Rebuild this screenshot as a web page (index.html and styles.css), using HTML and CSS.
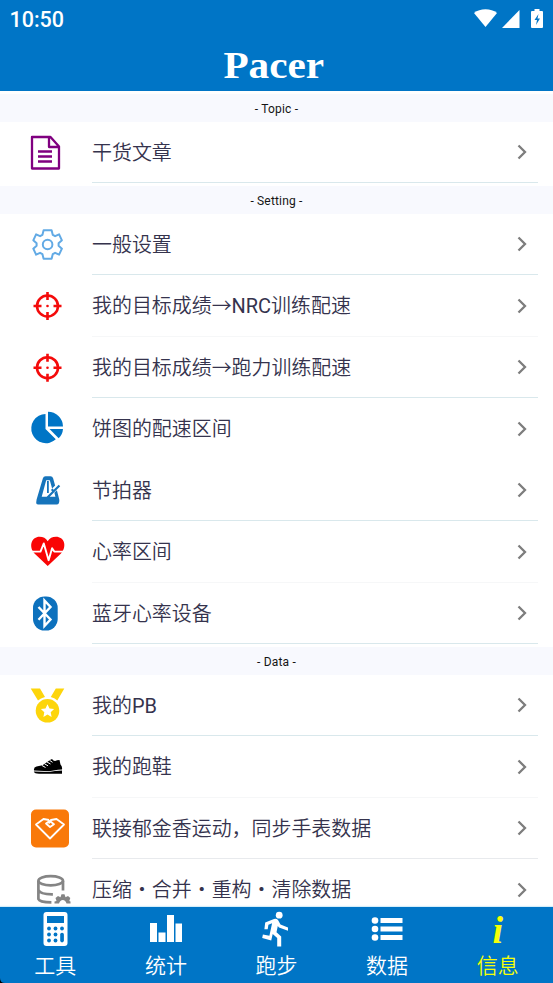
FILE: index.html
```
<!DOCTYPE html>
<html lang="zh-CN">
<head>
<meta charset="utf-8">
<title>Pacer</title>
<link rel="stylesheet" href="styles.css">
</head>
<body>
<div class="app">
  <header class="header">
    <div class="status">
      <span class="clock">10:50</span>
      <svg class="status-icons" width="72" height="20" viewBox="0 0 72 20" fill="#fff">
        <path d="M0 4C6-1 17-1 23 4L11.500 18z"/>
        <path d="M45.500 1v18H28z"/>
        <path d="M60.500 0h5v2h2.500q1 0 1 1v15q0 1-1 1h-10q-1 0-1-1V3q0-1 1-1h2.500z"/>
        <path d="M64.500 5l-4 6h2.500l-1 5 4-6.500h-2.500z" fill="#0075c6"/>
      </svg>
    </div>
    <h1 class="title"><span class="brand">Pacer</span></h1>
  </header>

  <main class="list">
    <h2 class="section"><span>- Topic -</span></h2>
    <a class="row">
      <svg class="icon" viewBox="0 121.5 92 61.5"><g fill="none" stroke="#800080" stroke-width="2.300" stroke-linejoin="round"><path d="M32 136.500h18.500l8.500 9.500v22H32zM49 137v9.500h10M38 151h14M38 156h14M38 161h14"/></g></svg>
      <span class="label line">干货文章</span><svg class="chevron" viewBox="0 0 10 16"><path d="M1.500 1.500L8 8l-6.500 6.500"/></svg>
    </a>

    <h2 class="section"><span>- Setting -</span></h2>
    <a class="row">
      <svg class="icon" viewBox="0 213.500 92 61.5"><g transform="translate(47.600 244)" fill="none" stroke="#62aae5" stroke-width="2" stroke-linejoin="round"><path d="M-4-14.200H4L5.200-9.600 7.500-8.300 11.500-10.200 14.300-4.200 11-1.200V1.200L14.300 4.200 11.500 10.200 7.500 8.300 5.200 9.600 4 14.200H-4L-5.200 9.600-7.500 8.300-11.500 10.200-14.300 4.200-11 1.200V-1.200L-14.300-4.200-11.500-10.200-7.500-8.300-5.200-9.600z"/><circle r="4.800"/></g></svg>
      <span class="label line">一般设置</span><svg class="chevron" viewBox="0 0 10 16"><path d="M1.500 1.500L8 8l-6.500 6.500"/></svg>
    </a>
    <a class="row">
      <svg class="icon" viewBox="0 275 92 61.5"><g transform="translate(47.500 306)" fill="none" stroke="#f40b0b" stroke-width="2.600"><circle r="10.500"/><path d="M0-14v8M0 6v8M-14 0h8M6 0h8"/><circle r="1.300" fill="#f40b0b" stroke="none"/></g></svg>
      <span class="label faint">我的目标成绩→<span class="latin">NRC</span>训练配速</span><svg class="chevron" viewBox="0 0 10 16"><path d="M1.500 1.500L8 8l-6.500 6.500"/></svg>
    </a>
    <a class="row">
      <svg class="icon" viewBox="0 336.500 92 61.5"><g transform="translate(47.500 367.200)" fill="none" stroke="#f40b0b" stroke-width="2.600"><circle r="10.500"/><path d="M0-14v8M0 6v8M-14 0h8M6 0h8"/><circle r="1.300" fill="#f40b0b" stroke="none"/></g></svg>
      <span class="label line">我的目标成绩→跑力训练配速</span><svg class="chevron" viewBox="0 0 10 16"><path d="M1.500 1.500L8 8l-6.500 6.500"/></svg>
    </a>
    <a class="row">
      <svg class="icon" viewBox="0 398 92 61.5"><g fill="#0075c6"><path d="M45.500 414V429l10.300 10.300A14.600 14.600 0 1 1 45.500 414z"/><path d="M48 411.800A15 15 0 0 1 63 426.500H48z"/><path d="M49.500 429H63Q62.600 434.500 58.700 438.300z"/></g></svg>
      <span class="label">饼图的配速区间</span><svg class="chevron" viewBox="0 0 10 16"><path d="M1.500 1.500L8 8l-6.500 6.500"/></svg>
    </a>
    <a class="row">
      <svg class="icon" viewBox="0 459.500 92 61.5"><path d="M45.500 475.700h5q2 0 2.600 2l2 7.200-3 3-2.300-8.200h-3.600l-4.500 16.500h5l5.500-5.500-1.300-1.300 1.500-1.500 1.300 1.300 5-5 1.500 1.500-8.500 8.500-2 2h5.700l-1-4 2.500-2.500 2.300 9q.4 1.500-.2 3.500-.3 1.700-2 1.700H38q-2 0-1.800-2l.4-3 6.300-21.200q.6-2 2.600-2z" fill="#1674bb"/><path d="M47 480.500h1.800V492.500H47z" fill="#1674bb"/></svg>
      <span class="label line">节拍器</span><svg class="chevron" viewBox="0 0 10 16"><path d="M1.500 1.500L8 8l-6.500 6.500"/></svg>
    </a>
    <a class="row">
      <svg class="icon" viewBox="0 521 92 61.5"><path d="M47.700 566L34.500 553.500C28 546 32 536.800 39.500 536.800Q45 536.800 47.700 541.200 50.500 536.800 56 536.800C64 536.800 67.500 546 61 553.500z" fill="#f90505"/><path d="M30 551.600h10.500l3.300-8.200 4.800 16.800 3.500-12 2.200 3.400H66" fill="none" stroke="#fff" stroke-width="1.900" stroke-linejoin="round"/></svg>
      <span class="label faint">心率区间</span><svg class="chevron" viewBox="0 0 10 16"><path d="M1.500 1.500L8 8l-6.500 6.500"/></svg>
    </a>
    <a class="row">
      <svg class="icon" viewBox="0 582.500 92 61.5"><rect x="33" y="596" width="24.700" height="34" rx="11.500" fill="#0d71bd"/><path d="M38.500 606.500l12 12.500-6 6.500v-25.500l6 6.500-12 12.700" fill="none" stroke="#fff" stroke-width="2.400"/></svg>
      <span class="label line">蓝牙心率设备</span><svg class="chevron" viewBox="0 0 10 16"><path d="M1.500 1.500L8 8l-6.500 6.500"/></svg>
    </a>

    <h2 class="section"><span>- Data -</span></h2>
    <a class="row">
      <svg class="icon" viewBox="0 674.500 92 61.5"><g fill="#fdd50b"><path d="M30.700 688h9.300l5 8.500q-4.500 1-7 3.500zM64.300 688h-8.500l-5 8.500q4.500 1 6.500 3.500z"/><circle cx="47.500" cy="710.300" r="11.800"/></g><path d="M47.500 703.700l2 4.300 4.600.6-3.400 3.200.9 4.600-4.100-2.300-4.100 2.300.9-4.600-3.400-3.200 4.600-.6z" fill="#fff"/></svg>
      <span class="label line">我的<span class="latin">PB</span></span><svg class="chevron" viewBox="0 0 10 16"><path d="M1.500 1.500L8 8l-6.500 6.500"/></svg>
    </a>
    <a class="row">
      <svg class="icon" viewBox="0 736 92 61.5"><path d="M34 770.500q-.5-3.500 2.500-4l6-1.200 7.500-5.300 2-1q2 3 5 1.300l2.500-.3 1 4.500q2 2 1.500 5l-4 .2-9 1.600z"/><path d="M33.800 771.500l15.200.6 6-1.200 7-.3v3.100h-23q-4.500 0-5.200-2.200z"/><path d="M42 765.500l3.500 2M44.500 763.800l3.500 2M47 762l3.500 2M49.500 760.300l3 2" stroke="#fff" stroke-width="1"/></svg>
      <span class="label faint">我的跑鞋</span><svg class="chevron" viewBox="0 0 10 16"><path d="M1.500 1.500L8 8l-6.500 6.500"/></svg>
    </a>
    <a class="row">
      <svg class="icon" viewBox="0 797.5 92 61.5"><rect x="31" y="809" width="38" height="38" rx="5" fill="#f97909"/><path d="M49 819.500L43.500 818.500 36 824 50 838 64 824 56.500 818.500 51 819.500 46 823 50 826.500 54 823.800 50.500 821 48.500 822.800" fill="none" stroke="#fff" stroke-width="1.800" stroke-linejoin="round"/></svg>
      <span class="label mid">联接郁金香运动，同步手表数据</span><svg class="chevron" viewBox="0 0 10 16"><path d="M1.500 1.500L8 8l-6.500 6.500"/></svg>
    </a>
    <a class="row">
      <svg class="icon" viewBox="0 859 92 61.5"><g fill="none" stroke="#858585" stroke-width="2.700"><ellipse cx="50.700" cy="880.800" rx="12.300" ry="4.600"/><path d="M38.400 881v18q1 3.200 13 3.400M63 881v9.500M38.400 890q2 4.500 14.500 4.300"/></g><path d="M54.500 903.500v-2l2-.5-1-3 2.500-2 2.500 1.200 1-2.900h3l1 2.900 2.500-1.200 2.300 2-1 3 1.200.5v2h-4q-1-3.500-3.700-3.500t-3.800 3.500z" fill="#858585"/></svg>
      <span class="label">压缩・合并・重构・清除数据</span><svg class="chevron" viewBox="0 0 10 16"><path d="M1.500 1.500L8 8l-6.500 6.500"/></svg>
    </a>
  </main>

  <nav class="tabs">
    <a class="tab"><svg class="tab-icon" viewBox="0 0 40 36"><rect x="8.500" y="1" width="24" height="34" rx="3" fill="#fff"/><g fill="#0075c6"><rect x="12" y="5" width="17" height="7"/><circle cx="14" cy="17.500" r="1.900"/><circle cx="20.500" cy="17.500" r="1.900"/><circle cx="27" cy="17.500" r="1.900"/><circle cx="14" cy="23.500" r="1.900"/><circle cx="20.500" cy="23.500" r="1.900"/><circle cx="14" cy="29.500" r="1.900"/><circle cx="20.500" cy="29.500" r="1.900"/><rect x="25.200" y="21.700" width="3.700" height="9.700" rx="1.800"/></g></svg><span>工具</span></a>
    <a class="tab"><svg class="tab-icon" viewBox="0 0 40 36" fill="#fff"><path d="M4 12h7v19H4zM12.500 21.500h7V31h-7zM21 4h7v27h-7zM29.500 12.500h6.500V31h-6.500z"/></svg><span>统计</span></a>
    <a class="tab"><svg class="tab-icon" viewBox="0 0 40 36" fill="#fff"><circle cx="23.200" cy="4.200" r="3.400"/><path d="M9.200 11.500L18 8q2.500-.8 4 1l2.500 4.500 7.500 3v3.200l-9-3.300-1.200-1.400-1.300 6.300 4.700 4.200V35.500h-4V27l-4.500-4-1.500 6.500L6.200 27l.7-3.500 6.500 1.300 2.700-12.500-3.700 1.500-.7 4.500H8.400z"/></svg><span>跑步</span></a>
    <a class="tab"><svg class="tab-icon" viewBox="0 0 40 36" fill="#fff"><circle cx="8" cy="9.500" r="3.300"/><circle cx="8" cy="18" r="3.300"/><circle cx="8" cy="26.500" r="3.300"/><path d="M13.500 7h22v5h-22zM13.500 15.500h22v5h-22zM13.500 24h22v5h-22z"/></svg><span>数据</span></a>
    <a class="tab active"><b class="info">i</b><span>信息</span></a>
    <svg class="corner" viewBox="0 0 5 5"><path d="M0 0Q0 5 5 5H0z"/></svg>
  </nav>
</div>
</body>
</html>
```
FILE: styles.css
```
* { box-sizing: border-box; }
body {
  margin: 0;
  background: #fff;
  font-family: Roboto, "Noto Sans CJK SC", sans-serif;
}
.app {
  display: flex;
  flex-direction: column;
  width: 553px;
  height: 983px;
  overflow: hidden;
}
.header {
  flex: none;
  height: 91px;
  background: #0075c6;
  color: #fff;
}
.status {
  display: flex;
  justify-content: space-between;
  height: 39px;
  padding: 9px 7px 0 9.500px;
}
.clock {
  font-size: 21.500px;
  line-height: 22px;
  font-weight: 500;
}
.title {
  margin: 0;
  padding-right: 6px;
  text-align: center;
  font: bold 37.500px/53px "Liberation Serif", serif;
}
.brand {
  display: inline-block;
  transform: scaleX(1.1);
}
.list {
  flex: none;
  height: 812.500px;
  overflow: hidden;
}
.section {
  height: 30.5px;
  margin: 0;
  padding-top: 3px;
  font-size: 12px;
  font-weight: 400;
  letter-spacing: 0.180px;
  text-align: center;
  color: #151515;
}
.section span {
  display: block;
  height: 27.5px;
  padding-top: 1px;
  line-height: 29px;
  background: #f8f9fe;
}
.row {
  display: flex;
  align-items: center;
  height: 61.5px;
  padding-right: 15px;
  position: relative;
}
.icon {
  flex: none;
  width: 92px;
  height: 61.5px;
}
.label {
  flex: 1;
  height: 61.5px;
  border-bottom: 1px solid transparent;
  font-size: 19.950px;
  line-height: 63.600px;
  font-weight: 350;
  color: #35334d;
  white-space: nowrap;
}
.latin { font-weight: 400; }
.line { border-color: #d9e8ec; }
.faint { border-color: #f6f7f8; }
.mid { border-color: #e8eaed; }
.chevron {
  position: absolute;
  right: 26px;
  top: 22.500px;
  width: 10px;
  height: 16px;
  fill: none;
  stroke: #7d7d7d;
  stroke-width: 2.300;
}
.tabs {
  position: relative;
  display: flex;
  flex: none;
  height: 76px;
  margin-top: 3.500px;
  background: #0075c6;
  box-shadow: 0 -1px 1px #d5eefa;
}
.tab {
  display: flex;
  flex: 1;
  flex-direction: column;
  align-items: center;
  padding-top: 4px;
  color: #fff;
  font-size: 21px;
  line-height: 30px;
  font-weight: 350;
}
.tab-icon {
  width: 40px;
  height: 36px;
  margin-bottom: 4px;
}
.active { color: #f6ff08; }
.info {
  height: 36px;
  margin-bottom: 4px;
  font: italic bold 38px/39px "Liberation Serif", serif;
}
.corner {
  position: absolute;
  left: 0;
  bottom: 0;
  width: 5px;
  height: 5px;
}
```
